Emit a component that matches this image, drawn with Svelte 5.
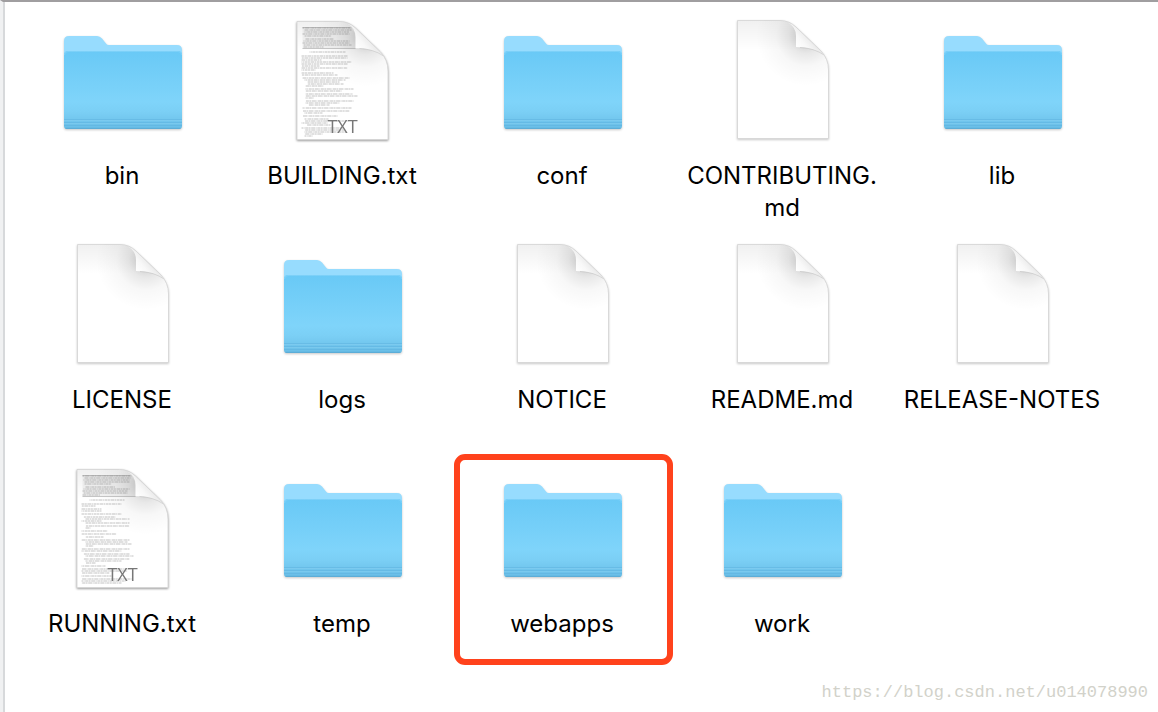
<script>
  const building = [
    [11, 25, 49], [13, 27, 47], [15, 27, 45], [17, 25, 47], [19, 27, 27],
    [22, 28, 28], [24, 26, 46], [26, 25, 47], [28, 26, 48], [30, 26, 20],
    [35, 32, 36],
    [39, 24, 46], [41, 24, 46], [43, 24, 20],
    [45, 24, 50], [47, 24, 46], [49, 24, 18],
    [51, 24, 46], [53, 24, 14],
    [56, 24, 32], [58, 24, 36],
    [61, 25, 47], [63, 27, 41], [65, 30, 32], [67, 30, 36], [69, 28, 18],
    [72, 28, 48], [74, 28, 36], [77, 28, 47], [79, 28, 52], [81, 28, 8],
    [84, 28, 48], [86, 28, 34], [88, 31, 21],
    [91, 25, 49], [94, 25, 47], [96, 27, 18],
    [99, 25, 35], [102, 27, 24], [104, 27, 44], [106, 24, 26],
    [108, 29, 24], [111, 24, 42], [113, 27, 40], [115, 27, 42], [117, 27, 18], [119, 27, 8]
  ];

  const running = [
    [11, 25, 49], [13, 27, 46], [15, 26, 46], [17, 27, 45], [19, 27, 27],
    [22, 28, 30], [24, 26, 46], [26, 25, 45], [28, 26, 44], [30, 25, 18],
    [35, 32, 35],
    [39, 24, 40], [41, 24, 14],
    [44, 24, 20], [46, 24, 20],
    [49, 24, 40], [52, 26, 32], [54, 28, 44], [56, 24, 20],
    [58, 28, 44], [61, 28, 44], [63, 28, 5],
    [66, 24, 26], [69, 24, 35], [72, 28, 18],
    [75, 24, 48], [77, 28, 42], [79, 28, 46], [81, 28, 8],
    [84, 24, 48], [86, 24, 40], [89, 26, 46], [91, 28, 48],
    [94, 26, 46], [96, 28, 36], [98, 28, 10],
    [101, 24, 24], [104, 24, 50], [106, 24, 46], [108, 24, 28],
    [111, 24, 30], [114, 24, 50], [116, 24, 44], [118, 24, 40]
  ];

  const items = [
    { name: 'bin', kind: 'folder' },
    { name: 'BUILDING.txt', kind: 'text', lines: building },
    { name: 'conf', kind: 'folder' },
    { name: 'CONTRIBUTING.md', kind: 'file' },
    { name: 'lib', kind: 'folder' },
    { name: 'LICENSE', kind: 'file' },
    { name: 'logs', kind: 'folder' },
    { name: 'NOTICE', kind: 'file' },
    { name: 'README.md', kind: 'file' },
    { name: 'RELEASE-NOTES', kind: 'file' },
    { name: 'RUNNING.txt', kind: 'text', lines: running },
    { name: 'temp', kind: 'folder' },
    { name: 'webapps', kind: 'folder', marked: true },
    { name: 'work', kind: 'folder' }
  ];

  // long names may only wrap before the extension
  function split(name) {
    const dot = name.lastIndexOf('.') + 1;
    return [name.slice(0, dot), name.slice(dot)];
  }
</script>

<svg class="defs" width="0" height="0" aria-hidden="true">
  <defs>
    <linearGradient id="front" x1="0" y1="0" x2="0" y2="1">
      <stop offset="0" stop-color="#69c9f6" />
      <stop offset="0.65" stop-color="#7fd4fa" />
      <stop offset="0.78" stop-color="#7bcff5" />
      <stop offset="1" stop-color="#68bde6" />
    </linearGradient>
    <linearGradient id="fold" gradientUnits="userSpaceOnUse" x1="78" y1="31" x2="91" y2="20">
      <stop offset="0" stop-color="#fff" />
      <stop offset="0.5" stop-color="#f8f8f8" />
      <stop offset="1" stop-color="#e8e8e8" />
    </linearGradient>
    <linearGradient id="top" gradientUnits="userSpaceOnUse" x1="0" y1="4" x2="0" y2="34">
      <stop offset="0" stop-color="#000" stop-opacity="0.06" />
      <stop offset="1" stop-color="#000" stop-opacity="0" />
    </linearGradient>
    <radialGradient id="shade" gradientUnits="userSpaceOnUse" cx="88" cy="20" r="50">
      <stop offset="0.15" stop-color="#000" stop-opacity="0.18" />
      <stop offset="0.35" stop-color="#000" stop-opacity="0.09" />
      <stop offset="0.6" stop-color="#000" stop-opacity="0.03" />
      <stop offset="1" stop-color="#000" stop-opacity="0" />
    </radialGradient>
  </defs>
</svg>

{#snippet folder()}
  <g transform="translate(0 1)">
    <path d="M6 39V24q0-5 5-5h28q3 0 5 2.500l4 5q1 1.500 3 1.500h68q5 0 5 5v6z" fill="#97dcfe" />
    <path d="M6 38q0-4 4-4h110q4 0 4 4v71q0 3-3 3H9q-3 0-3-3z" fill="url(#front)" />
    <path d="M6.500 38q0-3.500 3.500-3.500h110q3.500 0 3.500 3.500" fill="none" stroke="#8ad5fa" stroke-width="0.600" />
    <path d="M6 102.500h118M6 105.500h118M6 108.500h118" stroke="#5aaedb" stroke-width="0.900" opacity="0.5" />
    <path d="M6 103.500h118M6 106.500h118" stroke="#8fd4f5" stroke-width="0.700" opacity="0.5" />
    <path d="M7.500 111.300h115" stroke="#59a9d4" stroke-width="1" />
  </g>
{/snippet}

{#snippet page(lines)}
  {@const outline = 'M19.500 4.500H62Q71 4.500 78 11L103 35Q110.500 43 110.500 54V122.500H19.500z'}
  <g transform={lines ? 'translate(-0.5 1)' : null}>
    <path d={outline} fill="#fff" />
    <path d={outline} fill="url(#top)" />
    <path d={outline} fill="url(#shade)" />
    {#if lines}
      <path d="M25 10H72Q78 14 78 21V32H25z" fill="#777" opacity="0.09" />
      <path d="M25 31.500H78M25 10.500H73" stroke="#999" stroke-width="0.500" />
      {#each lines as [y, x, width], i}
        <line x1={x} y1={y} x2={x + width} y2={y} class="print" stroke-dashoffset={i * 3} />
      {/each}
    {/if}
    <path d="M70 6.500Q78 11 78 20V31Q95 31 106 39L103 35L78 11Q74 7 70 6.500z" fill="url(#fold)" />
    <path d="M82 31.500Q96 32 106 39" fill="none" stroke="#aaa" stroke-width="0.600" opacity="0.6" />
    <path d={outline} fill="none" stroke="#d6d6d6" stroke-width="0.900" />
    {#if lines}
      <text x="65" y="116" text-anchor="middle" class="badge">TXT</text>
    {/if}
  </g>
{/snippet}

<main class="window">
  <ul class="files">
    {#each items as item}
      {@const [stem, end] = split(item.name)}
      <li class="item" class:marked={item.marked}>
        <svg class="icon {item.kind}" viewBox="0 0 128 128" aria-hidden="true">
          {#if item.kind === 'folder'}
            {@render folder()}
          {:else}
            {@render page(item.lines)}
          {/if}
        </svg>
        <span class="name">{stem}<wbr />{end}</span>
      </li>
    {/each}
  </ul>
  <span class="watermark">https://blog.csdn.net/u014078990</span>
</main>

<style>
  :global(body) {
    margin: 0;
    background: #fff;
  }

  .defs {
    position: absolute;
  }

  .window {
    position: relative;
    box-sizing: border-box;
    min-height: 100vh;
    border-top: 2px solid #a09ea0;
    border-left: 3px solid #f0f1f2;
    box-shadow: inset 2px 0 #d7d9db;
    font-family: Inter, "Liberation Sans", sans-serif;
    color: #000;
  }

  .files {
    display: grid;
    grid-template-columns: repeat(auto-fill, 220px);
    grid-auto-rows: minmax(224px, auto);
    margin: 0;
    padding: 14px 0 0 9px;
    list-style: none;
  }

  .item {
    position: relative;
    display: flex;
    flex-direction: column;
    align-items: center;
    gap: 16px;
  }

  .icon {
    width: 128px;
    height: 128px;
    filter: drop-shadow(0 1px 1px rgba(0, 0, 0, 0.22));
  }

  .icon.text {
    filter: drop-shadow(0 1px 1px rgba(0, 0, 0, 0.4));
  }

  .name {
    max-width: 208px;
    font-size: 24px;
    line-height: 32px;
    text-align: center;
  }

  .print {
    stroke: #666;
    stroke-width: 0.8;
    stroke-dasharray: 2 0.6 4 0.5 1 0.6 3 0.4;
    opacity: 0.5;
  }

  .badge {
    font-family: "Open Sans", sans-serif;
    font-size: 18px;
    fill: #777;
  }

  /* red frame drawn round the folder to look at */
  .marked::after {
    content: "";
    position: absolute;
    inset: -10px -1px 23px 2px;
    border: 6px solid #ff421c;
    border-radius: 11px;
  }

  .watermark {
    position: absolute;
    right: 10px;
    bottom: 9px;
    font-family: "Liberation Mono", monospace;
    font-size: 17px;
    line-height: 20px;
    color: #d2d2ca;
  }
</style>
